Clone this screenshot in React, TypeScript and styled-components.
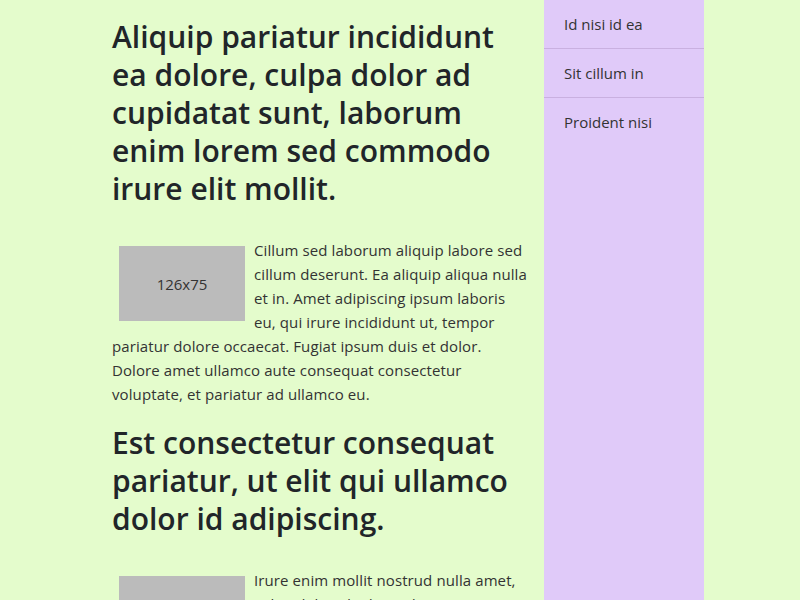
import styled, { createGlobalStyle } from "styled-components";

const GlobalStyle = createGlobalStyle`
  html, body {
    margin: 0;
    padding: 0;
    background: #e4fccc;
    font-family: "Open Sans", "Noto Sans", sans-serif;
    color: #212529;
  }
`;

const Container = styled.div`
  width: 608px;
  margin: 0 auto;
  display: flex;
  align-items: flex-start;
`;

const Main = styled.main`
  width: 448px;
  box-sizing: border-box;
  padding: 18px 16px 0;
`;

const Article = styled.section`
  &::after {
    content: "";
    display: block;
    clear: both;
  }
`;

const Heading = styled.h2`
  margin: 0 0 30px;
  font-size: 30px;
  line-height: 38px;
  font-weight: 600;
  color: #212529;
`;

const Paragraph = styled.p`
  margin: 0 0 18px;
  font-size: 15px;
  line-height: 24px;
  letter-spacing: 0.1px;
  color: #333;
`;

const Placeholder = styled.div`
  float: left;
  width: 126px;
  height: 75px;
  margin: 8px 9px 8px 7px;
  background: #bbbbbb;
  color: #333;
  font-size: 15px;
  display: flex;
  align-items: center;
  justify-content: center;
`;

const Sidebar = styled.nav`
  width: 160px;
  min-height: 600px;
  background: #e0caf9;
`;

const NavItem = styled.div`
  padding: 12px 20px;
  font-size: 15px;
  line-height: 24px;
  color: #333;
  border-bottom: 1px solid #c9b0e0;

  &:last-child {
    border-bottom: none;
  }
`;

type Post = { title: string; body: string };

const posts: Post[] = [
  {
    title:
      "Aliquip pariatur incididunt ea dolore, culpa dolor ad cupidatat sunt, laborum enim lorem sed commodo irure elit mollit.",
    body:
      "Cillum sed laborum aliquip labore sed cillum deserunt. Ea aliquip aliqua nulla et in. Amet adipiscing ipsum laboris eu, qui irure incididunt ut, tempor pariatur dolore occaecat. Fugiat ipsum duis et dolor. Dolore amet ullamco aute consequat consectetur voluptate, et pariatur ad ullamco eu.",
  },
  {
    title: "Est consectetur consequat pariatur, ut elit qui ullamco dolor id adipiscing.",
    body:
      "Irure enim mollit nostrud nulla amet, culpa dolor id ad cupidatat sunt. Laborum enim lorem sed commodo irure elit mollit. Aliquip pariatur incididunt ea dolore.",
  },
];

const links = ["Id nisi id ea", "Sit cillum in", "Proident nisi"];

export default function App() {
  return (
    <>
      <GlobalStyle />
      <Container>
        <Main>
          {posts.map((p) => (
            <Article key={p.title}>
              <Heading>{p.title}</Heading>
              <Placeholder>126x75</Placeholder>
              <Paragraph>{p.body}</Paragraph>
            </Article>
          ))}
        </Main>
        <Sidebar>
          {links.map((l) => (
            <NavItem key={l}>{l}</NavItem>
          ))}
        </Sidebar>
      </Container>
    </>
  );
}
